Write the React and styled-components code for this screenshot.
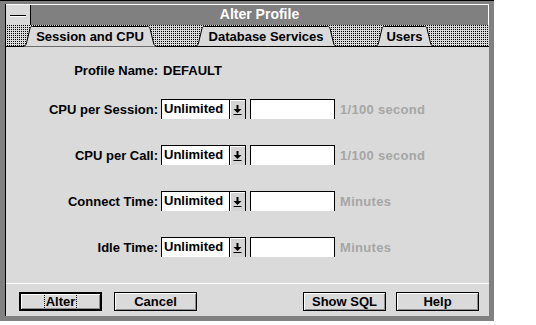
import React from 'react'
import styled, { createGlobalStyle } from 'styled-components'

const GlobalStyle = createGlobalStyle`
  html, body {
    margin: 0;
    background: #fff;
  }
  body {
    font-family: "Liberation Sans", Arial, sans-serif;
  }
`

const Frame = styled.div`
  width: 494px;
  height: 321px;
  box-sizing: border-box;
  background: #808080;
  border-top: 1px solid #000;
  padding: 3px 5px 5px 5px;
  display: flex;
  flex-direction: column;
`

const Window = styled.div`
  flex: 1;
  display: flex;
  flex-direction: column;
  border-left: 1px solid #000;
`

const TitleBar = styled.div`
  height: 21px;
  box-sizing: border-box;
  display: flex;
  background: #808080;
  border-top: 1px solid #fff;
  border-right: 1px solid #fff;
`

const SysMenu = styled.div`
  width: 24px;
  background: #dadada;
  border-right: 1px solid #000;
  display: flex;
  align-items: center;
  justify-content: center;
`

const SysDash = styled.div`
  width: 16px;
  height: 1px;
  background: #000;
  border-bottom: 1px solid #fff;
  margin-top: 2px;
`

const Title = styled.div`
  flex: 1;
  text-align: center;
  color: #fff;
  font-size: 14px;
  font-weight: bold;
  line-height: 18px;
`

const TabStrip = styled.div`
  height: 21px;
  display: flex;
  align-items: flex-end;
  gap: 36px;
  padding-left: 16px;
  border-bottom: 1px solid #000;
  background-color: #dadada;
  background-image: conic-gradient(at 1px 1px, #000 25%, transparent 0);
  background-size: 2px 2px;
`

const Tab = styled.div`
  position: relative;
  width: ${p => p.$width}px;
  height: 21px;
  margin-bottom: -1px;
  flex: none;
`

const TabShape = styled.svg`
  position: absolute;
  left: 0;
  top: 0;
`

const TabLabel = styled.span`
  position: relative;
  display: block;
  text-align: center;
  font-size: 13px;
  font-weight: bold;
  line-height: 20px;
  padding-top: 1px;
  color: #000;
`

const Body = styled.div`
  flex: 1;
  background: #dadada;
  display: flex;
  flex-direction: column;
`

const Form = styled.div`
  flex: 1;
  padding-top: 13px;
  display: flex;
  flex-direction: column;
  gap: 26px;
`

const Row = styled.div`
  display: flex;
  align-items: center;
  height: 20px;
  margin-top: ${p => p.$first ? '-7px' : '0'};
  margin-bottom: ${p => p.$head ? '-7px' : '0'};
`

const Label = styled.div`
  width: 152px;
  text-align: right;
  font-size: 13px;
  font-weight: bold;
  color: #000;
  white-space: nowrap;
`

const Value = styled.div`
  margin-left: 5px;
  font-size: 13px;
  font-weight: bold;
  color: #000;
`

const Combo = styled.div`
  margin-left: 3px;
  width: 85px;
  height: 20px;
  box-sizing: border-box;
  display: flex;
  background: #fff;
  border-top: 1px solid #000;
  border-left: 1px solid #000;
`

const ComboText = styled.div`
  flex: 1;
  padding-left: 2px;
  font-size: 13px;
  font-weight: bold;
  line-height: 18px;
  color: #000;
`

const ArrowButton = styled.div`
  width: 17px;
  box-sizing: border-box;
  background: #d4d4d4;
  border-left: 1px solid #000;
  border-right: 1px solid #000;
  box-shadow: inset 1px 1px #fff;
  display: flex;
  align-items: center;
  justify-content: center;
`

const Field = styled.div`
  margin-left: 4px;
  width: 85px;
  height: 20px;
  box-sizing: border-box;
  background: #fff;
  border: 1px solid #000;
  border-bottom: none;
`

const Hint = styled.div`
  margin-left: 5px;
  font-size: 13px;
  font-weight: bold;
  color: #a6a6a6;
  letter-spacing: 0.3px;
`

const Footer = styled.div`
  height: 33px;
  box-sizing: border-box;
  border-top: 1px solid #fff;
  padding: 8px 10px 0 13px;
  display: flex;
  justify-content: space-between;
`

const ButtonGroup = styled.div`
  display: flex;
  gap: ${p => p.$gap}px;
`

const Button = styled.button`
  width: 83px;
  height: 19px;
  box-sizing: border-box;
  padding: 0;
  background: #dadada;
  border: ${p => p.$default ? '2px' : '1px'} solid #000;
  box-shadow: inset 1px 1px #fff, inset -1px -1px #909090;
  font-family: "Liberation Sans", Arial, sans-serif;
  font-size: 13px;
  font-weight: bold;
  color: #000;
  line-height: 14px;
`

const Focus = styled.span`
  outline: 1px dotted #000;
  outline-offset: 0;
  padding: 0 1px;
`

const tabs = [
  { label: 'Session and CPU', width: 136, active: true },
  { label: 'Database Services', width: 144 },
  { label: 'Users', width: 61 },
]

const limits = [
  { label: 'CPU per Session:', hint: '1/100 second' },
  { label: 'CPU per Call:', hint: '1/100 second' },
  { label: 'Connect Time:', hint: 'Minutes' },
  { label: 'Idle Time:', hint: 'Minutes' },
]

const tabPath = (w, active) => {
  const d = `M0,20.5 C3,20.5 4,19 4.5,17 L8,2.5 C8.3,1 9,0.5 10.5,0.5 H${w - 10.5} ` +
    `C${w - 9},0.5 ${w - 8.3},1 ${w - 8},2.5 L${w - 4.5},17 C${w - 4},19 ${w - 3},20.5 ${w},20.5`
  return active ? d : d + ' Z'
}

const DownIcon = () => (
  <svg width="9" height="10" viewBox="0 0 9 10">
    <rect x="3.5" y="0" width="2" height="4" fill="#000" />
    <polygon points="0.5,4 8.5,4 4.5,8" fill="#000" />
    <rect x="0.5" y="9" width="8" height="1" fill="#000" />
  </svg>
)

export default function App() {
  return (
    <>
      <GlobalStyle />
      <Frame>
        <Window>
          <TitleBar>
            <SysMenu><SysDash /></SysMenu>
            <Title>Alter Profile</Title>
          </TitleBar>
          <TabStrip>
            {tabs.map(t => (
              <Tab key={t.label} $width={t.width}>
                <TabShape width={t.width} height="21">
                  <path d={tabPath(t.width, t.active)} fill="#dadada" stroke="#000" strokeWidth="1" />
                </TabShape>
                <TabLabel>{t.label}</TabLabel>
              </Tab>
            ))}
          </TabStrip>
          <Body>
            <Form>
              <Row $head>
                <Label>Profile Name:</Label>
                <Value>DEFAULT</Value>
              </Row>
              {limits.map(l => (
                <Row key={l.label}>
                  <Label>{l.label}</Label>
                  <Combo>
                    <ComboText>Unlimited</ComboText>
                    <ArrowButton><DownIcon /></ArrowButton>
                  </Combo>
                  <Field />
                  <Hint>{l.hint}</Hint>
                </Row>
              ))}
            </Form>
            <Footer>
              <ButtonGroup $gap={12}>
                <Button $default><Focus>Alter</Focus></Button>
                <Button>Cancel</Button>
              </ButtonGroup>
              <ButtonGroup $gap={10}>
                <Button>Show SQL</Button>
                <Button>Help</Button>
              </ButtonGroup>
            </Footer>
          </Body>
        </Window>
      </Frame>
    </>
  )
}
